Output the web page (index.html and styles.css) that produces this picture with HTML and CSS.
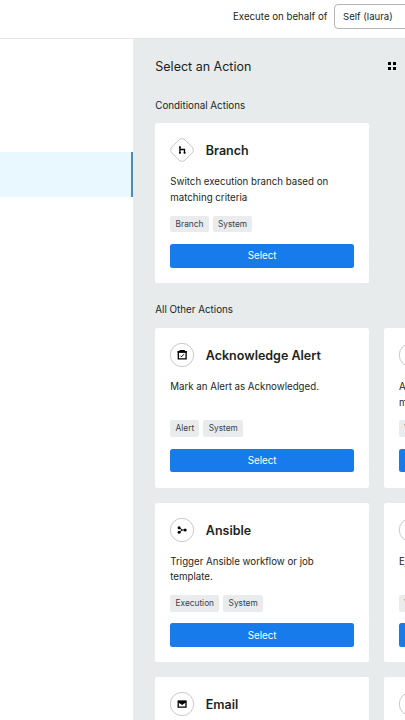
FILE: index.html
```html
<!DOCTYPE html>
<html lang="en">
<head>
  <meta charset="UTF-8">
  <title>Select an Action</title>
  <link rel="stylesheet" href="styles.css">
</head>
<body>

  <header class="topbar">
    <label for="runas">Execute on behalf of</label>
    <button class="runas" id="runas" type="button">Self (laura)</button>
  </header>

  <div class="layout">
    <aside class="steps">
      <div class="step active"></div>
    </aside>

    <main class="panel">
      <div class="panel-head">
        <h1>Select an Action</h1>
        <svg class="grid-icon" viewBox="0 0 8 8">
          <path d="M0 0h3v3H0zM5 0h3v3H5zM0 5h3v3H0zM5 5h3v3H5z"/>
        </svg>
      </div>

      <h2>Conditional Actions</h2>
      <div class="cards">
        <section class="card">
          <div class="card-head">
            <svg class="icon" viewBox="0 0 24 24">
              <rect class="ring" x="2.7" y="2.7" width="18.6" height="18.6" rx="4.5" transform="rotate(45 12 12)"/>
              <path class="line" d="M9.9 8.5v6.9M9.9 11.5h4.6v3.9"/>
              <path d="M9 8.4h1.8v1.3H9zM9 14h1.8v1.5H9zM13.7 14h1.8v1.5h-1.8z"/>
            </svg>
            <h3>Branch</h3>
          </div>
          <p>Switch execution branch based on matching criteria</p>
          <div class="tags"><span>Branch</span><span>System</span></div>
          <button class="select" type="button">Select</button>
        </section>
      </div>

      <h2>All Other Actions</h2>
      <div class="cards">
        <section class="card">
          <div class="card-head">
            <svg class="icon" viewBox="0 0 24 24">
              <circle class="ring" cx="12" cy="12" r="11.7"/>
              <path class="line" d="M8.3 8.9h7.8v7H8.3z"/>
              <path d="M7.6 8.1h9.2v1.7H7.6zM9.5 7h5.4v1.5H9.5z"/>
              <path class="check" d="M10.3 12.6l1.2 1.2 2.5-2.6"/>
            </svg>
            <h3>Acknowledge Alert</h3>
          </div>
          <p>Mark an Alert as Acknowledged.</p>
          <div class="tags"><span>Alert</span><span>System</span></div>
          <button class="select" type="button">Select</button>
        </section>

        <section class="card">
          <div class="card-head">
            <svg class="icon" viewBox="0 0 24 24"><circle class="ring" cx="12" cy="12" r="11.7"/></svg>
          </div>
          <p>A<br>m</p>
          <div class="tags"><span>V</span></div>
          <button class="select" type="button"></button>
        </section>

        <section class="card">
          <div class="card-head">
            <svg class="icon" viewBox="0 0 24 24">
              <circle class="ring" cx="12" cy="12" r="11.7"/>
              <path class="check" d="M9 9.8l3.6 2.2H15M9 14.2l3.6-2.2"/>
              <circle cx="9.1" cy="9.8" r="1.5"/>
              <circle cx="9.1" cy="14.2" r="1.5"/>
              <circle cx="15.2" cy="12" r="1.5"/>
            </svg>
            <h3>Ansible</h3>
          </div>
          <p>Trigger Ansible workflow or job template.</p>
          <div class="tags"><span>Execution</span><span>System</span></div>
          <button class="select" type="button">Select</button>
        </section>

        <section class="card">
          <div class="card-head">
            <svg class="icon" viewBox="0 0 24 24"><circle class="ring" cx="12" cy="12" r="11.7"/></svg>
          </div>
          <p>Ej</p>
          <div class="tags"><span>V</span></div>
          <button class="select" type="button"></button>
        </section>

        <section class="card">
          <div class="card-head">
            <svg class="icon" viewBox="0 0 24 24">
              <circle class="ring" cx="12" cy="12" r="11.7"/>
              <path class="line" d="M8.2 9.2h7.8v5.9H8.2z"/>
              <path d="M8 8.8h8.2v1.5L12.1 13 8 10.3z"/>
            </svg>
            <h3>Email</h3>
          </div>
        </section>

        <section class="card">
          <div class="card-head">
            <svg class="icon" viewBox="0 0 24 24"><circle class="ring" cx="12" cy="12" r="11.7"/></svg>
          </div>
        </section>
      </div>
    </main>
  </div>

</body>
</html>
```
FILE: styles.css
```css
:root {
  --blue: #187bec;
  --gray: #e7ebec;
  --text: #1b1f22;
}
*, *::before, *::after {
  box-sizing: border-box;
  margin: 0;
  padding: 0;
}
body {
  height: 720px;
  overflow: hidden;
  font-family: Inter, Lato, sans-serif;
  font-size: 9.7px;
  color: var(--text);
  background: #fff;
}
button {
  font-family: inherit;
  cursor: pointer;
}
.topbar {
  display: flex;
  align-items: center;
  height: 39px;
  padding: 0 0 5px 233px;
  border-bottom: 1px solid #e3e6e7;
  overflow: hidden;
  white-space: nowrap;
}
.topbar label {
  flex: none;
  width: 101px;
  font-size: 9.7px;
}
.runas {
  flex: none;
  width: 120px;
  height: 25px;
  padding-left: 8px;
  border: 1px solid #b2b4b6;
  border-radius: 4px;
  background: #fff;
  color: var(--text);
  font-size: 9.6px;
  text-align: left;
}
.layout {
  display: flex;
  height: 681px;
  overflow: hidden;
}
.steps {
  flex: none;
  width: 133px;
  padding-top: 112.5px;
}
.step.active {
  height: 45px;
  background: #e9f8ff;
  border-right: 2px solid #5288b8;
}
.panel {
  flex: none;
  width: 272px;
  padding: 18px 0 0 22.3px;
  overflow: hidden;
  background: var(--gray);
}
.panel-head {
  display: flex;
  align-items: center;
  height: 18px;
  margin-bottom: 24.8px;
}
h1 {
  flex: none;
  width: 232.5px;
  font-size: 12.5px;
  font-weight: normal;
}
.grid-icon {
  flex: none;
  width: 8px;
  height: 8px;
}
h2 {
  height: 23.5px;
  line-height: 11.5px;
  font-size: 9.8px;
  font-weight: normal;
}
.cards {
  display: grid;
  grid-template-columns: 213.7px 213.7px;
  grid-auto-rows: 159.7px;
  gap: 15px;
  margin-bottom: 21.5px;
}
.card {
  padding: 15px;
  background: #fff;
  border-radius: 2px;
}
.card-head {
  display: flex;
  align-items: center;
  gap: 11.5px;
  height: 24px;
  margin-bottom: 12px;
}
.icon {
  flex: none;
  width: 24px;
  height: 24px;
  overflow: visible;
}
.icon .ring {
  fill: #fff;
  stroke: #a2a4a5;
  stroke-width: 0.6;
}
.icon .line {
  fill: none;
  stroke: #000;
  stroke-width: 1.3;
}
.icon .check {
  fill: none;
  stroke: #000;
  stroke-width: 1;
}
h3 {
  padding-top: 1px;
  font-size: 12.5px;
  font-weight: 600;
}
.card p {
  height: 31.4px;
  margin-bottom: 10.1px;
  line-height: 15.7px;
}
.tags {
  display: flex;
  gap: 4px;
  margin-bottom: 11.4px;
}
.tags span {
  height: 16.7px;
  padding: 0 5.3px;
  border-radius: 2px;
  background: #e9ebed;
  color: #35424e;
  font-size: 8.3px;
  line-height: 17.2px;
}
.select {
  display: block;
  width: 100%;
  height: 23.8px;
  border: none;
  border-radius: 2.5px;
  background: var(--blue);
  color: #fff;
  font-size: 9.8px;
}
```
